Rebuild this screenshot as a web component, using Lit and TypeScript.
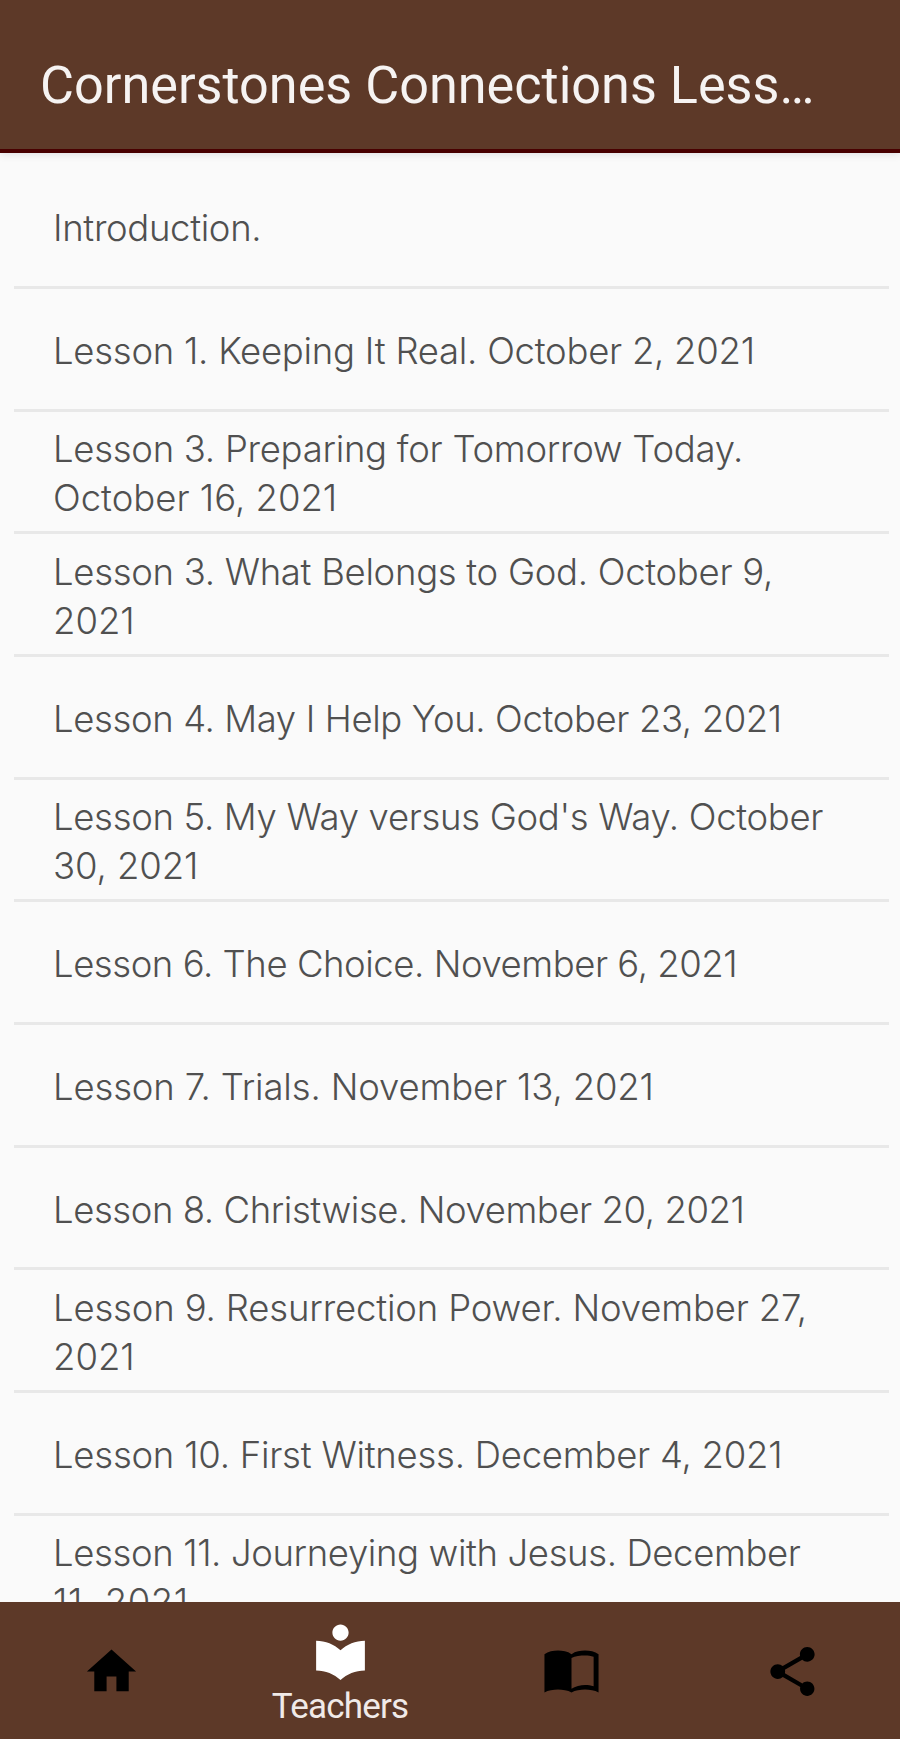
import { LitElement, html, css, svg } from "lit";
import { customElement } from "lit/decorators.js";
import { styleMap } from "lit/directives/style-map.js";

interface Line { text: string; tracking: number; }
const line = (text: string, tracking: number): Line => ({ text, tracking });

const LESSONS: Line[][] = [
  [line("Introduction.", -0.35)],
  [line("Lesson 1. Keeping It Real. October 2, 2021", -0.26)],
  [line("Lesson 3. Preparing for Tomorrow Today.", -0.28), line("October 16, 2021", 0)],
  [line("Lesson 3. What Belongs to God. October 9,", -0.3), line("2021", 0)],
  [line("Lesson 4. May I Help You. October 23, 2021", -0.38)],
  [line("Lesson 5. My Way versus God's Way. October", -0.32), line("30, 2021", -0.1)],
  [line("Lesson 6. The Choice. November 6, 2021", -0.45)],
  [line("Lesson 7. Trials. November 13, 2021", -0.15)],
  [line("Lesson 8. Christwise. November 20, 2021", -0.43)],
  [line("Lesson 9. Resurrection Power. November 27,", -0.16), line("2021", 0)],
  [line("Lesson 10. First Witness. December 4, 2021", -0.24)],
  [line("Lesson 11. Journeying with Jesus. December", -0.38), line("11, 2021", 0.6)],
];

const home = svg`<path d="M10 20v-6h4v6h5v-8h3L12 3 2 12h3v8z"/>`;
const reader = svg`<path d="M12 11.55C9.64 9.35 6.48 8 3 8v11c3.48 0 6.64 1.35 9 3.55 2.36-2.19 5.52-3.55 9-3.55V8c-3.48 0-6.64 1.35-9 3.55zM12 8c1.66 0 3-1.34 3-3s-1.34-3-3-3-3 1.34-3 3 1.34 3 3 3z"/>`;
const book = svg`<path fill-rule="evenodd" d="M12 5C10.4 3.8 8.300 3.500 6.500 3.500C4.600 3.500 2.500 3.900 1 5V20.500C2.500 19.600 4.700 19.300 6.500 19.300C8.300 19.300 10.500 19.600 12 20.500C13.500 19.600 15.700 19.300 17.500 19.300C19.300 19.300 21.500 19.600 23 20.500V5C21.500 3.900 19.400 3.500 17.500 3.500C15.700 3.500 13.600 3.800 12 5ZM21 18C19.900 17.700 18.700 17.500 17.500 17.500C15.800 17.500 13.400 18.100 12 19V6.500C13.400 5.700 15.800 5.500 17.500 5.500C18.700 5.500 19.900 5.650 21 6Z"/>`;
const share = svg`<path d="M18 16.080c-.76 0-1.440.3-1.960.77L8.910 12.700c.05-.23.09-.46.09-.7s-.04-.47-.09-.7l7.050-4.110c.54.5 1.250.81 2.040.81 1.660 0 3-1.340 3-3s-1.340-3-3-3-3 1.340-3 3c0 .24.04.47.09.7L8.040 9.810C7.500 9.310 6.790 9 6 9c-1.660 0-3 1.340-3 3s1.340 3 3 3c.79 0 1.500-.31 2.040-.81l7.120 4.160c-.05.21-.08.43-.08.65 0 1.610 1.310 2.920 2.920 2.920s2.920-1.310 2.920-2.920-1.310-2.920-2.920-2.920z"/>`;

@customElement("app-root")
export class AppRoot extends LitElement {
  static styles = css`
    :host { display: block; }
    .screen {
      display: flex; flex-direction: column; height: 1739px; overflow: hidden;
      background: #fafafa; font-family: Roboto, sans-serif;
    }
    .bar {
      flex: none; box-sizing: border-box; height: 153px; padding: 52px 40px 0;
      background: #5d3928; border-bottom: 4px solid #480000; color: #f6f3f2;
      box-shadow: 0 1px 8px rgba(70, 70, 90, 0.16);
    }
    .title { margin: 0; font-size: 52.200px; line-height: 68px; font-weight: 400; white-space: nowrap; }
    .list { flex: 1; min-height: 0; overflow: hidden; margin: 0; padding: 13.200px 11px 0 14px; list-style: none; }
    .row {
      box-sizing: border-box; height: 122.700px; padding: 5px 0 0 39px; border-bottom: 3px solid #e8e8e8;
      display: flex; flex-direction: column; justify-content: center;
      font-family: Inter, Roboto, sans-serif;
      font-size: 36.500px; line-height: 49px; font-weight: 300; color: #505050;
    }
    .line { white-space: nowrap; display: block; }
    .nav {
      flex: none; height: 137px; display: grid; grid-template-columns: 222px 236px 226px 216px;
      background: #5d3928; color: #000;
    }
    .tab { display: flex; flex-direction: column; align-items: center; justify-content: center; padding-top: 2px; }
    .active { color: #fff; }
    .icon { width: 59px; height: 59px; fill: currentColor; display: block; }
    .active .icon { width: 65px; height: 65px; margin-bottom: 5px; }
    .label { font: 400 35px/36px Roboto, sans-serif; letter-spacing: -0.800px; color: #f0eae8; }
  `;

  render() {
    return html`
      <div class="screen">
        <header class="bar"><h1 class="title">Cornerstones Connections Less…</h1></header>
        <ul class="list">
          ${LESSONS.map((l) => html`<li class="row">${l.map((t) => html`<span class="line" style=${styleMap({ letterSpacing: `${t.tracking}px` })}>${t.text}</span>`)}</li>`)}
        </ul>
        <nav class="nav">
          <a class="tab"><svg class="icon" viewBox="0 0 24 24">${home}</svg></a>
          <a class="tab active"><svg class="icon" viewBox="0 0 24 24">${reader}</svg><span class="label">Teachers</span></a>
          <a class="tab"><svg class="icon" viewBox="0 0 24 24">${book}</svg></a>
          <a class="tab"><svg class="icon" viewBox="0 0 24 24">${share}</svg></a>
        </nav>
      </div>
    `;
  }
}
